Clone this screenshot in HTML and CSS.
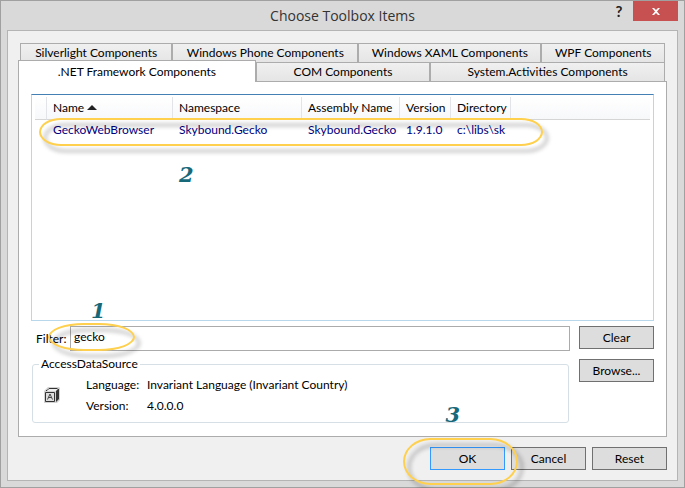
FILE: index.html
```html
<!DOCTYPE html>
<html lang="en">
<head>
<meta charset="utf-8">
<title>Choose Toolbox Items</title>
<link rel="stylesheet" href="styles.css">
</head>
<body>
<div class="window">
  <header class="titlebar">
    <h1 class="title">Choose Toolbox Items</h1>
    <div class="caption-buttons">
      <button class="help" type="button" aria-label="Help">?</button>
      <button class="close" type="button" aria-label="Close">
        <svg width="8" height="7" viewBox="0 0 8 7"><path d="M0 0h2l2 2 2-2h2L5 3.500 8 7H6L4 5 2 7H0l3-3.500z" fill="#fff"/></svg>
      </button>
    </div>
  </header>
  <main class="client">
    <div class="tabs" role="tablist">
      <div class="tab-row back">
        <button class="tab w152" type="button" role="tab">Silverlight Components</button>
        <button class="tab w186" type="button" role="tab">Windows Phone Components</button>
        <button class="tab w183" type="button" role="tab">Windows XAML Components</button>
        <button class="tab w123" type="button" role="tab">WPF Components</button>
      </div>
      <div class="tab-row front">
        <button class="tab selected" type="button" role="tab" aria-selected="true">.NET Framework Components</button>
        <button class="tab w174" type="button" role="tab">COM Components</button>
        <button class="tab w235" type="button" role="tab">System.Activities Components</button>
      </div>
    </div>
    <section class="panel">
      <div class="list">
        <table class="items">
          <colgroup>
            <col class="c-check"><col class="c-name"><col class="c-namespace"><col class="c-assembly"><col class="c-version"><col class="c-directory"><col>
          </colgroup>
          <thead>
            <tr>
              <th></th>
              <th>Name <svg class="sort" width="10" height="5" viewBox="0 0 10 5"><path d="M0 5 5 0l5 5z" fill="#222"/></svg></th>
              <th>Namespace</th>
              <th>Assembly Name</th>
              <th>Version</th>
              <th>Directory</th>
              <th></th>
            </tr>
          </thead>
          <tbody>
            <tr>
              <td></td>
              <td>GeckoWebBrowser</td>
              <td>Skybound.Gecko</td>
              <td>Skybound.Gecko</td>
              <td>1.9.1.0</td>
              <td>c:\libs\sk</td>
              <td></td>
            </tr>
          </tbody>
        </table>
        <span class="ring ring-row"></span>
        <span class="step step-two">2</span>
      </div>
      <div class="lower">
        <div class="filter">
          <label for="filter">Filter:</label>
          <input id="filter" type="text" value="gecko">
          <span class="ring ring-filter"></span>
          <span class="step step-one">1</span>
        </div>
        <button class="button" type="button">Clear</button>
        <fieldset class="details">
          <legend>AccessDataSource</legend>
          <svg class="item-icon" width="16" height="16" viewBox="0 0 16 16">
            <path d="M0 4 4 0h11l1 1v12l-3 3H0z" fill="#d2d2d2"/>
            <path d="M2 4 5 1h8l1 1-2 2z" fill="#eee"/>
            <path d="M2 3.500h1L5 1.500h8.500" fill="none" stroke="#333"/>
            <path d="M12 4l2-2h1v10l-3 3z" fill="#333"/>
            <path d="M1.500 5.500h9v9h-9z" fill="#ddd" stroke="#333"/>
            <path d="M3.500 12.500 6 7l2.500 5.500M4.500 10.500h3" fill="none" stroke="#444"/>
          </svg>
          <dl class="facts">
            <dt>Language:</dt><dd>Invariant Language (Invariant Country)</dd>
            <dt>Version:</dt><dd>4.0.0.0</dd>
          </dl>
          <span class="step step-three">3</span>
        </fieldset>
        <button class="button browse" type="button">Browse...</button>
      </div>
    </section>
    <footer class="actions">
      <button class="button default" type="button">OK</button>
      <button class="button" type="button">Cancel</button>
      <button class="button" type="button">Reset</button>
      <span class="ring ring-ok"></span>
    </footer>
  </main>
</div>
</body>
</html>
```
FILE: styles.css
```css
* { box-sizing: border-box; }

body {
  margin: 0;
  font: 12px/16px Lato, "Open Sans", sans-serif;
  color: #000;
}

button, input { font: inherit; color: inherit; }

.window {
  display: flex;
  flex-direction: column;
  min-height: 100vh;
  padding: 0 6px 6px;
  background: #d9d9d9;
  border: 1px solid #a0a0a0;
}

.titlebar {
  position: relative;
  display: flex;
  justify-content: center;
  height: 29px;
}

.title {
  margin: 0;
  font-family: "Open Sans", sans-serif;
  font-size: 14px;
  line-height: 29px;
  font-weight: 400;
  color: #333;
}

.caption-buttons {
  position: absolute;
  top: 0;
  right: 0;
  display: flex;
}

.help, .close {
  height: 20px;
  padding: 0;
  border: 0;
  background: none;
}

.help {
  width: 28px;
  font-weight: 700;
  font-size: 15px;
  color: #222;
}

.close {
  width: 45px;
  background: #c75050;
}

.client {
  display: flex;
  flex: 1;
  flex-direction: column;
  padding: 12px 10px 10px;
  background: #f0f0f0;
  border: 1px solid #b4b4b4;
}

.tab-row {
  display: flex;
  margin: 0 2px;
}

.tab {
  height: 19px;
  padding: 0;
  border: 1px solid #acacac;
  border-bottom: 0;
  background: linear-gradient(#f0f0f0, #e5e5e5);
  white-space: nowrap;
}

.w123 { flex: 123 1 0; }
.w152 { flex: 152 1 0; }
.w174 { flex: 174 1 0; }
.w183 { flex: 183 1 0; }
.w186 { flex: 186 1 0; }
.w235 { flex: 235 1 0; }

.tab.selected {
  z-index: 1;
  flex: 238 1 0;
  height: 22px;
  margin: -2px 0 -1px -2px;
  background: #fff;
}

.panel {
  display: flex;
  flex: 1;
  flex-direction: column;
  gap: 5px;
  padding: 12px 12px 13px;
  background: #fff;
  border: 1px solid #acacac;
}

.list {
  position: relative;
  flex: 1;
  padding: 2px 3px;
  border: 1px solid #b9d7ea;
  border-top-color: #4580b4;
}

.items {
  width: 100%;
  table-layout: fixed;
  border-collapse: separate;
  border-spacing: 0;
}

.c-check { width: 12px; }
.c-name { width: 126px; }
.c-namespace { width: 129px; }
.c-assembly { width: 98px; }
.c-version { width: 51px; }
.c-directory { width: 60px; }

.items th, .items td {
  height: 23px;
  padding: 0 0 0 6px;
  font-weight: 400;
  text-align: left;
  white-space: nowrap;
}

.items th {
  border-right: 1px solid #e2e4e7;
  border-bottom: 1px solid #d5d5d5;
  background: linear-gradient(#fff, #f7f8fa);
}

.items th:last-child { border-right: 0; }
.items td { height: 20px; color: #000080; }

.items th:first-child, .items td:first-child { padding: 0; }

.sort { vertical-align: 2px; }

.lower {
  display: grid;
  grid-template-columns: 1fr 75px;
  column-gap: 9px;
  row-gap: 5px;
}

.filter {
  position: relative;
  display: flex;
  align-items: center;
}

.filter label { width: 39px; padding-left: 5px; }

.filter input {
  flex: 1;
  min-width: 0;
  height: 25px;
  padding: 0 3px 5px;
  border: 1px solid #ababab;
  outline: 0;
}

.button {
  width: 75px;
  height: 23px;
  padding: 0;
  border: 1px solid #707070;
  background: #ddd;
}

.button.default { border-color: #3399ff; }
.browse { margin-top: 3px; }

.details {
  position: relative;
  display: flex;
  gap: 26px;
  min-width: 0;
  margin: 0 1px;
  padding: 3px 11px 8px;
  border: 1px solid #d5dfe5;
  border-radius: 3px;
}

.details legend { margin-left: -5px; padding: 0 2px; }
.item-icon { margin-top: 12px; }

.facts {
  display: grid;
  grid-template-columns: 55px 1fr;
  gap: 5px 6px;
  margin: 2px 0 0;
}

.facts dd { margin: 0; }

.actions {
  position: relative;
  display: flex;
  justify-content: flex-end;
  gap: 6px;
  padding-top: 10px;
}

/* Hand-drawn call-outs laid over the dialog */
.ring {
  position: absolute;
  border: 2px solid #ffd04d;
  filter: drop-shadow(5px 6px 2px rgba(0, 0, 0, .35));
  pointer-events: none;
}

.ring-row {
  top: 23px;
  left: 7px;
  width: 504px;
  height: 28px;
  border-radius: 22px / 14px;
}

.ring-filter {
  top: -3px;
  left: 17px;
  width: 87px;
  height: 28px;
  border-radius: 36px / 14px;
}

.ring-ok {
  top: 1px;
  right: 149px;
  width: 115px;
  height: 47px;
  border-radius: 28px / 24px;
}

.step {
  position: absolute;
  font: italic 700 21px/20px "DejaVu Serif", serif;
  color: #17697a;
}

.step-one { top: -25px; left: 60px; }
.step-two { top: 70px; left: 147px; }
.step-three { top: 33px; right: 108px; }
```
